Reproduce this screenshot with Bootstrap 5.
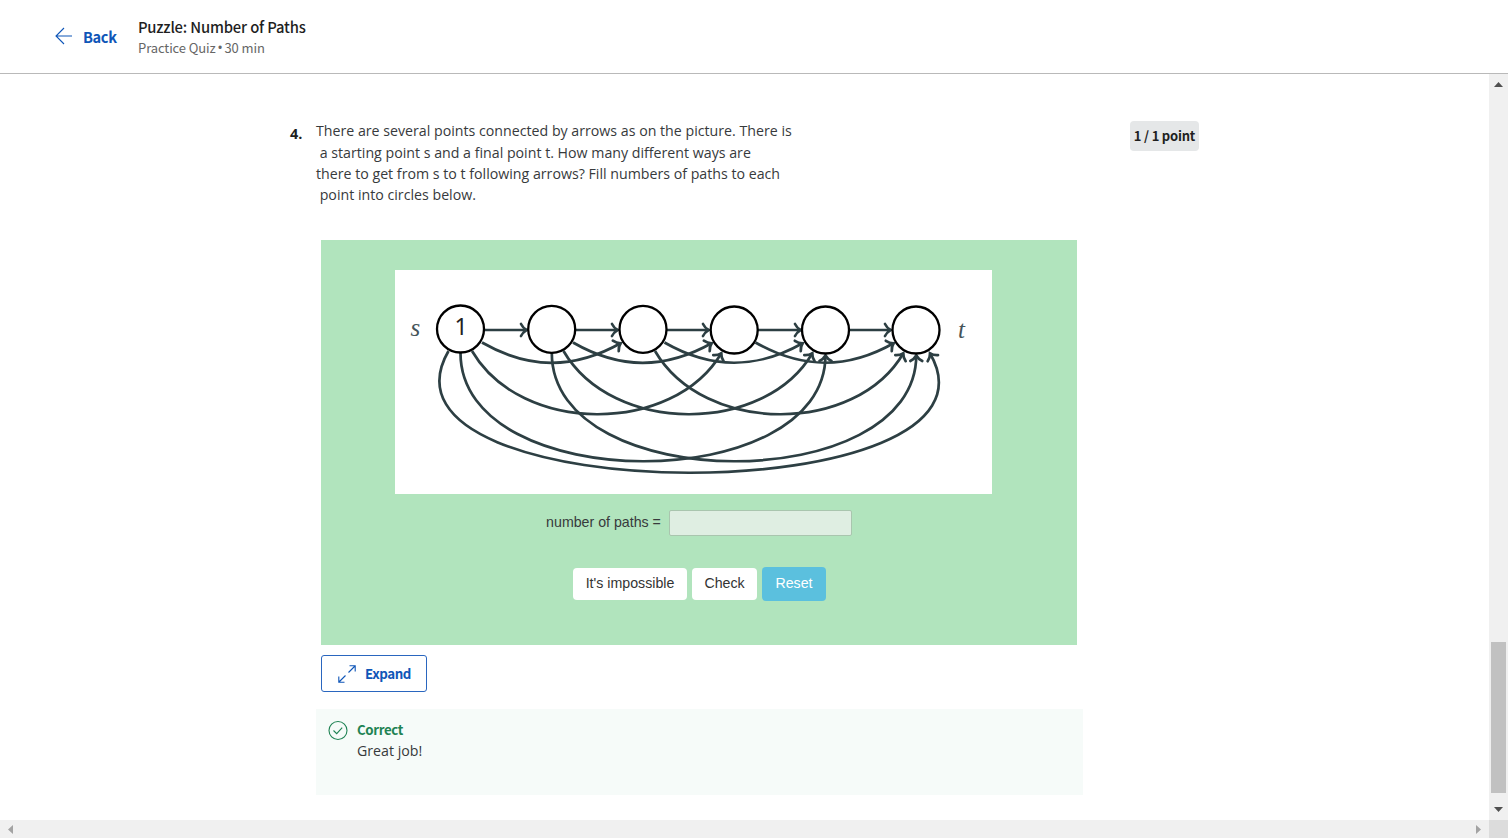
<!DOCTYPE html>
<html lang="en">
<head>
<meta charset="utf-8">
<meta name="viewport" content="width=device-width, initial-scale=1">
<title>Puzzle: Number of Paths</title>
<link href="https://cdn.jsdelivr.net/npm/bootstrap@5.3.0/dist/css/bootstrap.min.css" rel="stylesheet">
<style>
  body { font-family: "Open Sans", sans-serif; font-size: 14.2px; line-height: 21.3px; color: #373a3c; }
  .ui-font { font-family: "Noto Sans CJK SC", sans-serif; }
  .quiz-header { height: 74px; border-bottom: 1px solid #b9b9b9; padding-left: 55px; }
  .back-link { color: #0f56b8; font-size: 14.6px; letter-spacing: -.35px; width: 83px; gap: 10px; }
  .quiz-title { font-size: 14.8px; letter-spacing: -.22px; word-spacing: .3px; line-height: 21px; color: #1f1f1f; font-weight: 500; }
  .quiz-meta { font-size: 13px; letter-spacing: -.1px; line-height: 21px; color: #666; }
  .dot { font-family: "Open Sans", sans-serif; font-size: 15px; line-height: 1; margin: 0 -1.2px; }
  .quiz-main { padding: 46px 290px 0 290px; }
  .q-number { width: 26px; padding-top: 3px; font-size: 14.5px; color: #1f1f1f; }
  .q-body { width: 767px; }
  .q-text { height: 120px; padding-top: .3px; white-space: pre; }
  .points { margin-left: 47px; margin-top: 1px; width: 69px; height: 30px; border-radius: 4px; background: #e5e7e8; color: #1f1f1f; font-size: 13px; letter-spacing: -.2px; }
  .puzzle { width: 756px; height: 405px; margin-left: 5px; background: #b1e4bd; padding: 30px 85px 0 74px; font-family: "Liberation Sans", sans-serif; }
  .graph { width: 597px; height: 224px; }
  .answer-row { margin-top: 16px; padding-left: 11px; height: 26px; gap: 8px; font-size: 14.2px; }
  .answer-row .form-control { width: 183px; height: 26px; background: #dfeee2; border: 1px solid #a9c5ae; border-radius: 2px; }
  .action-row { margin-top: 31px; padding-left: 11px; gap: 5px; height: 34px; }
  .action-row .btn { height: 32px; padding: 0 0 0 1px; font-size: 14.2px; border: 0; border-radius: 4px; color: #333; background: #fff; }
  .action-row .btn-reset { width: 64px; height: 34px; background: #5bc0de; color: #fff; }
  .btn-impossible { width: 114px; }
  .btn-verify { width: 65px; }
  .btn-expand { width: 106px; height: 37px; margin: 10px 0 0 5px; padding: 0 0 0 1px; border: 1px solid #2a66bf; border-radius: 3px; color: #0f56b8; font-size: 13.3px; letter-spacing: -.4px; gap: 9px; }
  .feedback { margin-top: 17px; height: 86px; padding: 10px 12px; gap: 9px; background: #f6fbf9; }
  .feedback-title { color: #1f8354; font-size: 13.3px; letter-spacing: -.4px; }
  .track { background: #f0f0f0; }
  .v-track { width: 19px; padding: 8px 0 8.5px; }
  .v-thumb { width: 15px; height: 151px; margin-bottom: 14px; background: #c1c1c1; }
  .h-track { height: 18px; }
  .corner { width: 19px; background: #dcdcdc; }
</style>
</head>
<body class="vh-100 overflow-hidden d-flex flex-column bg-white">
  <header class="quiz-header d-flex align-items-center flex-shrink-0 ui-font">
    <a class="back-link d-flex align-items-center text-decoration-none fw-bold" href="#">
      <svg width="18" height="18" viewBox="0 0 18 18" fill="none" stroke="currentColor" stroke-width="1.1"><path d="M17 9H1M9 1L1 9l8 8"/></svg>
      <span>Back</span>
    </a>
    <div>
      <div class="quiz-title">Puzzle: Number of Paths</div>
      <div class="quiz-meta">Practice Quiz <span class="dot">•</span> 30 min</div>
    </div>
  </header>

  <div class="d-flex flex-grow-1 overflow-hidden">
    <main class="quiz-main flex-grow-1 d-flex align-items-start">
      <div class="q-number fw-bold flex-shrink-0">4.</div>
      <div class="q-body flex-shrink-0">
        <div class="q-text">There are several points connected by arrows as on the picture. There is
&nbsp;a starting point s and a final point t. How many different ways are
there to get from s to t following arrows? Fill numbers of paths to each
&nbsp;point into circles below.</div>

        <section class="puzzle">
          <svg class="graph d-block bg-white" viewBox="395 270 597 224">
            <defs>
              <marker id="head" markerUnits="userSpaceOnUse" markerWidth="20" markerHeight="20" refX="0" refY="0" viewBox="-10 -10 20 20" orient="auto">
                <path d="M-6-6Q-4-2-.5 0Q-4 2-6 6" fill="none" stroke="#2d3f43" stroke-width="2.700" stroke-linecap="round"/>
              </marker>
            </defs>
            <g fill="none" stroke="#2d3f43" stroke-width="2.7">
              <path d="M484 330H527" marker-end="url(#head)"/>
              <path d="M575 330H618" marker-end="url(#head)"/>
              <path d="M667 330H709" marker-end="url(#head)"/>
              <path d="M758 330H801" marker-end="url(#head)"/>
              <path d="M849 330H891" marker-end="url(#head)"/>
              <path d="M482 342.5C529 369.5 574 369.5 621 343" marker-end="url(#head)"/>
              <path d="M573 342.5C620 369.5 665 369.5 712 343" marker-end="url(#head)"/>
              <path d="M664.500 342.5C711.500 369.500 756.500 369.500 803 343" marker-end="url(#head)"/>
              <path d="M755.500 342.5C802.500 369.500 847.500 369.500 894 343" marker-end="url(#head)"/>
              <path d="M472 351C521 435 673 435 721.500 353" marker-end="url(#head)"/>
              <path d="M563.500 351C612.500 435 764.500 435 812.500 353" marker-end="url(#head)"/>
              <path d="M655 351C704 435 856 435 903.500 353" marker-end="url(#head)"/>
              <path d="M460.500 353C460.500 497 825.500 497 825.500 355" marker-end="url(#head)"/>
              <path d="M551.800 353C551.800 497 916.300 497 916.300 355" marker-end="url(#head)"/>
              <path d="M448.500 351C354.500 513 1023.500 513 929.800 353" marker-end="url(#head)"/>
            </g>
            <g fill="#fff" stroke="#000" stroke-width="2.3">
              <circle cx="460.500" cy="329" r="23.500"/>
              <circle cx="551.700" cy="329.300" r="23.500"/>
              <circle cx="643" cy="329.300" r="23.500"/>
              <circle cx="734.200" cy="330" r="23.500"/>
              <circle cx="825.500" cy="330" r="23.500"/>
              <circle cx="916" cy="330" r="23.500"/>
            </g>
            <text x="461" y="335" text-anchor="middle" font-family="Noto Sans, sans-serif" font-size="23" fill="#222">1</text>
            <g font-family="Liberation Serif, serif" font-style="italic" font-size="25" fill="#45545a">
              <text x="410.500" y="336">s</text>
              <text x="958" y="338">t</text>
            </g>
          </svg>
          <div class="answer-row d-flex align-items-center justify-content-center">
            <label for="paths">number of paths =</label>
            <input id="paths" class="form-control p-0" type="text">
          </div>
          <div class="action-row d-flex align-items-center justify-content-center">
            <button class="btn btn-impossible" type="button">It's impossible</button>
            <button class="btn btn-verify" type="button">Check</button>
            <button class="btn btn-reset" type="button">Reset</button>
          </div>
        </section>

        <button class="btn btn-expand ui-font fw-bold d-flex align-items-center justify-content-center" type="button">
          <svg width="18" height="18" viewBox="0 0 18 18" fill="none" stroke="currentColor" stroke-width="1.1"><path d="M10.500 7.500L17 1M11.500 .8H17.200V6.500M7.500 10.500L1 17M.8 11.500V17.200H6.500"/></svg>
          <span>Expand</span>
        </button>

        <div class="feedback d-flex align-items-start">
          <svg class="flex-shrink-0" width="20" height="22" viewBox="0 0 20 22" fill="none" stroke="#1f8354" stroke-width="1.1"><circle cx="10" cy="11.500" r="9"/><path d="M5.500 11.500l3.200 3.200 5.500-6"/></svg>
          <div>
            <div class="feedback-title ui-font fw-bold">Correct</div>
            <div>Great job!</div>
          </div>
        </div>
      </div>
      <div class="points ui-font fw-bold d-flex align-items-center justify-content-center flex-shrink-0">1 / 1 point</div>
    </main>
    <div class="track v-track flex-shrink-0 d-flex flex-column align-items-center">
      <svg width="9" height="5" viewBox="0 0 9 5"><path d="M0 5L4.500 0L9 5z" fill="#505050"/></svg>
      <div class="v-thumb mt-auto"></div>
      <svg width="9" height="5" viewBox="0 0 9 5"><path d="M0 0L4.500 5L9 0z" fill="#505050"/></svg>
    </div>
  </div>

  <footer class="track h-track d-flex flex-shrink-0 align-items-stretch">
    <div class="flex-grow-1 d-flex align-items-center justify-content-between px-2">
      <svg width="5" height="9" viewBox="0 0 5 9"><path d="M5 0L0 4.500L5 9z" fill="#a3a3a3"/></svg>
      <svg width="5" height="9" viewBox="0 0 5 9"><path d="M0 0L5 4.500L0 9z" fill="#a3a3a3"/></svg>
    </div>
    <div class="corner"></div>
  </footer>
<script src="https://cdn.jsdelivr.net/npm/bootstrap@5.3.0/dist/js/bootstrap.bundle.min.js"></script>
</body>
</html>
